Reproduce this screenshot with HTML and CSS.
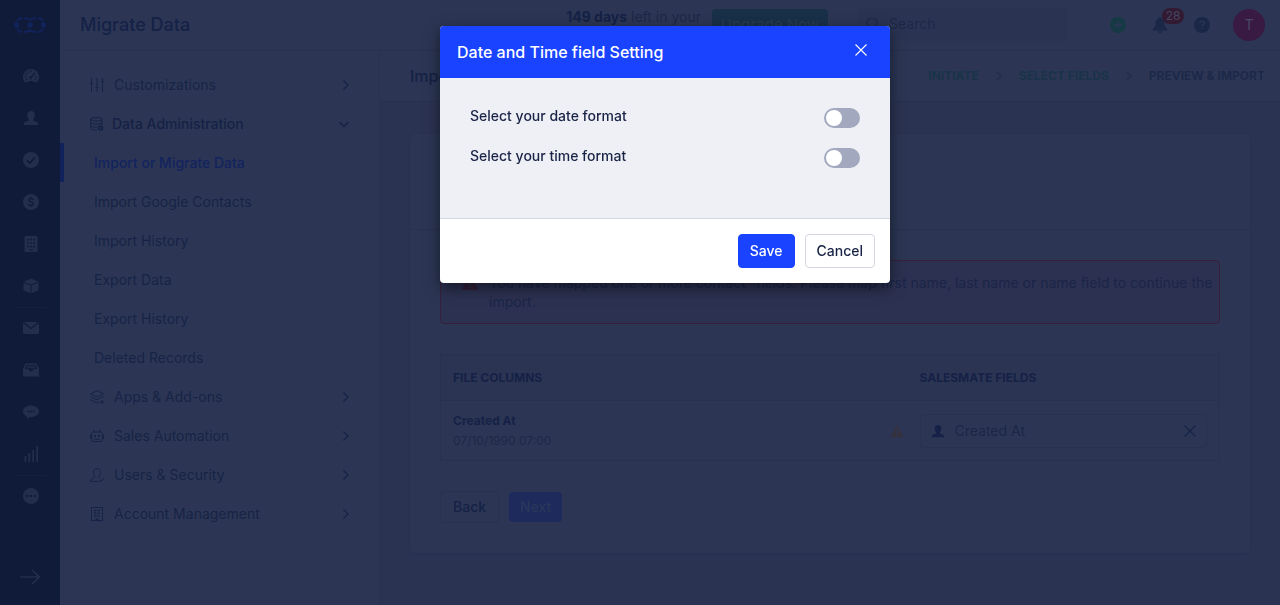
FILE: index.html
```html
<!DOCTYPE html>
<html lang="en">
<head>
<meta charset="utf-8">
<title>Migrate Data</title>
<link rel="stylesheet" href="styles.css">
</head>
<body>
<svg class="sprite" aria-hidden="true">
  <symbol id="person" viewBox="0 0 16 16"><path d="M8 1C5.700 1 4.200 2.600 4.200 5c0 1.700.6 3.300 1.600 4.200v1.300c-.5.8-4 1-4.800 2.800V15h14v-1.700c-.8-1.800-4.300-2-4.800-2.800V9.200c1-.9 1.600-2.500 1.600-4.200C11.800 2.600 10.300 1 8 1z" fill="currentColor"/></symbol>
  <symbol id="warn" viewBox="0 0 16 16"><path fill="currentColor" fill-rule="evenodd" d="M8 1.500 15.500 15H.5zM7.200 6v4.500h1.600V6zm0 5.700v1.600h1.600v-1.600z"/></symbol>
  <symbol id="right" viewBox="0 0 12 12"><path d="m3.500 1.500 4.500 4.500-4.500 4.500" fill="none" stroke="currentColor" stroke-width="1.400"/></symbol>
  <symbol id="down" viewBox="0 0 12 12"><path d="m1.500 4 4.500 4.500L10.500 4" fill="none" stroke="currentColor" stroke-width="1.400"/></symbol>
  <symbol id="cross" viewBox="0 0 12 12"><path d="m.5.5 11 11m0-11-11 11" fill="none" stroke="currentColor" stroke-width="1.100"/></symbol>
</svg>

<div class="app">
  <nav class="rail" aria-label="Main">
    <a class="rail-logo" href="#" aria-label="Home"><svg width="34" height="18" viewBox="0 0 34 18"><g fill="none" stroke="currentColor" stroke-width="1.800"><path d="M4 5C5 3 6.500 2 9 2m2 0c3 0 4 .5 6 2 2-1.500 3-2 6-2M25 2c2.500 0 4 1 5 3M4 13C5 15 6.500 16 9 16m2 0c3 0 4-.5 6-2 2 1.500 3 2 6 2m2 0c2.500 0 4-1 5-3"/></g><g fill="currentColor"><circle cx="3.500" cy="9" r="2.700"/><circle cx="17" cy="9" r="2.700"/><circle cx="30.500" cy="9" r="2.700"/></g></svg></a>
    <a class="rail-item" href="#" aria-label="Dashboard"><svg width="16" height="16" viewBox="0 0 16 16"><path d="M8 1a8 8 0 0 0-6 13.300h2.500c1-1 2-1.400 3.500-1.400s2.500.4 3.500 1.400H14A8 8 0 0 0 8 1z" fill="currentColor"/><g class="cut-line"><path d="M8 2.200v2M4.700 3.200l.8 1.500M2.500 5.700l1.500.8M1.800 9h2M14.200 9h-2M3 12l1.300-.8M13 12l-1.300-.8M7.500 9.800l4.500-5" stroke-width="1.200"/><circle cx="7.700" cy="9.700" r="1"/></g></svg></a>
    <a class="rail-item" href="#" aria-label="Contacts"><svg width="16" height="16"><use href="#person"/></svg></a>
    <a class="rail-item" href="#" aria-label="Activities"><svg width="16" height="16" viewBox="0 0 16 16"><circle cx="8" cy="8" r="8" fill="currentColor"/><path class="cut-line" d="m4 8.300 2.800 2.700L12 5.300" stroke-width="1.600"/></svg></a>
    <a class="rail-item" href="#" aria-label="Deals"><svg width="16" height="16" viewBox="0 0 16 16"><circle cx="8" cy="8" r="8" fill="currentColor"/><path class="cut-line" d="M10.200 6c-.3-1-1.100-1.400-2.200-1.400-1.300 0-2.200.6-2.200 1.600C5.800 8.500 10.300 7.300 10.300 9.700c0 1-.9 1.700-2.300 1.700-1.300 0-2.200-.6-2.400-1.600M8 3v1.600m0 6.800V13" stroke-width="1.300"/></svg></a>
    <a class="rail-item" href="#" aria-label="Companies"><svg width="16" height="16" viewBox="0 0 16 16"><rect x="1.500" width="13" height="16" rx="1.500" fill="currentColor"/><path class="cut-line" d="M4 3.500h8M4 7h8M4 10.500h8" stroke-width="1.600" stroke-dasharray="1.800 1.300"/><path class="cut-line" d="M6 14h4" stroke-width="1"/></svg></a>
    <a class="rail-item" href="#" aria-label="Products"><svg width="16" height="16" viewBox="0 0 16 16"><path d="m8 .5 7.500 3.200v8.600L8 15.500.5 12.300V3.700z" fill="currentColor"/><path class="cut-line" d="M.5 4.200 8 7.200l7.500-3M8 7.200v8.300" stroke-width="1"/></svg></a>
    <hr class="rail-rule">
    <a class="rail-item" href="#" aria-label="Email"><svg width="16" height="16" viewBox="0 0 16 16"><rect y="2" width="16" height="12" rx="1.500" fill="currentColor"/><path class="cut-line" d="m.5 2.500 7.500 6 7.500-6" stroke-width="1.300"/></svg></a>
    <a class="rail-item" href="#" aria-label="Inbox"><svg width="16" height="16" viewBox="0 0 16 16"><path fill="currentColor" fill-rule="evenodd" d="M2.300 1.500h11.400L16 7v7.500H0V7zM3.300 3 2 7h3.700c0 1.500 1 2.300 2.300 2.300S10.300 8.500 10.300 7H14l-1.300-4z"/><path d="M4 4.300h8M3.500 5.800h9" stroke="currentColor"/></svg></a>
    <a class="rail-item" href="#" aria-label="Chat"><svg width="16" height="16" viewBox="0 0 16 16"><path d="M8 1.500c4.500 0 8 2.500 8 5.800s-3.500 5.800-8 5.800H7c-1 .9-2.300 1.700-4 2.200.7-.9 1-1.800.9-2.900C1.500 11.400 0 9.600 0 7.300 0 4 3.500 1.500 8 1.500z" fill="currentColor"/><path class="cut-line" d="M4.500 7.500h7" stroke-width="1.600" stroke-dasharray="1.600 1.100"/></svg></a>
    <a class="rail-item" href="#" aria-label="Reports"><svg width="16" height="16" viewBox="0 0 16 16"><path d="M2.500 16v-6M6.300 16V7M10.200 16V4M14.200 16V0" fill="none" stroke="currentColor" stroke-width="1.700"/></svg></a>
    <hr class="rail-rule">
    <a class="rail-item" href="#" aria-label="More"><svg width="16" height="16" viewBox="0 0 16 16"><circle cx="8" cy="8" r="8" fill="currentColor"/><path class="cut-line" d="M3 8h10" stroke-width="2" stroke-dasharray="2 2"/></svg></a>
    <button class="rail-expand" type="button" aria-label="Expand menu"><svg width="20" height="16" viewBox="0 0 20 16"><path d="M0 8h19M12 1l7.300 7-7.300 7" fill="none" stroke="currentColor" stroke-width="1.600"/></svg></button>
  </nav>

  <div class="main">
    <header class="topbar">
      <h1 class="page-title">Migrate Data</h1>
      <p class="trial"><strong>149 days</strong> <span>left in your</span></p>
      <button class="upgrade" type="button">Upgrade Now</button>
      <label class="search"><svg width="14" height="14" viewBox="0 0 14 14"><circle cx="6" cy="6" r="5" fill="none" stroke="currentColor" stroke-width="1.200"/><path d="m9.600 9.600 4 4" stroke="currentColor" stroke-width="1.200"/></svg><input type="search" placeholder="Search" aria-label="Search"></label>
      <div class="tools">
        <button class="tool tool-add" type="button" aria-label="Add"><svg width="16" height="16" viewBox="0 0 16 16"><circle cx="8" cy="8" r="8" fill="currentColor"/><path class="cut-top" d="M8 4v8M4 8h8" stroke-width="1.500"/></svg></button>
        <button class="tool" type="button" aria-label="Notifications"><svg width="16" height="16" viewBox="0 0 16 16"><path d="M8 0c-.8 0-1.300.5-1.300 1.200C4.500 1.800 3.500 3.500 3.500 6c0 3-1 4.500-2.700 6v1.500h14.400V12c-1.700-1.500-2.700-3-2.700-6 0-2.500-1-4.200-3.200-4.800C9.300.5 8.800 0 8 0zM6 14.200a2 1.800 0 0 0 4 0z" fill="currentColor"/></svg><span class="badge">28</span></button>
        <button class="tool" type="button" aria-label="Help"><svg width="16" height="16" viewBox="0 0 16 16"><circle cx="8" cy="8" r="8" fill="currentColor"/><path class="cut-top" d="M5.800 6.300c0-1.300.9-2.200 2.200-2.200s2.200.8 2.200 2c0 1.500-2.200 1.600-2.200 3.400M8 10.800v1.500" stroke-width="1.300"/></svg></button>
        <button class="avatar" type="button">T</button>
      </div>
    </header>

    <div class="body">
      <aside class="settings" aria-label="Settings">
        <a class="group" href="#"><svg width="14" height="14" viewBox="0 0 14 14"><g class="line"><path d="M1.500 0v14M7 0v14M12.500 0v14M0 5.500h3M5.500 9.500h3M11 3.500h3"/></g></svg><span>Customizations</span><svg class="arrow"><use href="#right"/></svg></a>
        <a class="group open" href="#"><svg width="14" height="14" viewBox="0 0 14 14"><g class="line"><ellipse cx="6.300" cy="2.300" rx="5.600" ry="1.800"/><path d="M.7 2.300v9c0 1 2.300 1.800 5.300 1.800h1M11.900 2.300V8M.7 5.300c0 2.400 11.200 2.400 11.200 0M.7 8.300c0 1.500 3.500 2.100 6.300 1.800"/><circle cx="10.500" cy="11" r="1.900" stroke-width="1.800"/></g></svg><span>Data Administration</span><svg class="arrow"><use href="#down"/></svg></a>
        <a class="sub current" href="#">Import or Migrate Data</a>
        <a class="sub" href="#">Import Google Contacts</a>
        <a class="sub" href="#">Import History</a>
        <a class="sub" href="#">Export Data</a>
        <a class="sub" href="#">Export History</a>
        <a class="sub" href="#">Deleted Records</a>
        <a class="group" href="#"><svg width="14" height="14" viewBox="0 0 14 14"><g class="line"><path d="m7 .6 6.500 3.200L7 7 .5 3.800zM.3 6.500 7 9.800l6.700-3.300M.3 9.500 7 12.900l2-1M12 10v4M10 12h4"/></g></svg><span>Apps &amp; Add-ons</span><svg class="arrow"><use href="#right"/></svg></a>
        <a class="group" href="#"><svg width="14" height="14" viewBox="0 0 14 14"><g class="line"><rect x="1.700" y="3" width="10.600" height="9.500" rx="1.500"/><path d="M4 3V.5M10 3V.5M.5 5.500v4.500M13.500 5.500v4.500M4 10.200h6" /><path d="M4 7h2M8 7h2" stroke-width="2"/></g></svg><span>Sales Automation</span><svg class="arrow"><use href="#right"/></svg></a>
        <a class="group" href="#"><svg width="14" height="14" viewBox="0 0 14 14"><g class="line"><path d="M9 13.400H.6v-1.600c.8-1.300 4-1.500 4.200-2.600V8C3.800 7.200 3.500 5.800 3.500 4.300 3.500 2 4.800.6 7 .6s3.500 1.400 3.500 3.700c0 1.500-.3 2.900-1.300 3.700v1.500l1 .7M9.500 11.700l1.700 1.700 2.600-3.400"/></g></svg><span>Users &amp; Security</span><svg class="arrow"><use href="#right"/></svg></a>
        <a class="group" href="#"><svg width="14" height="14" viewBox="0 0 14 14"><g class="line"><rect x="1.500" y=".5" width="11" height="13"/><path d="M4 3.500h6M4 6.200h6M4 9h6" stroke-width="1.500" stroke-dasharray="2.500 1"/><path d="M5.500 12.500h3" stroke-width="2"/></g></svg><span>Account Management</span><svg class="arrow"><use href="#right"/></svg></a>
      </aside>

      <main class="content">
        <div class="subhead">
          <h2 class="sub-title">Import Contacts</h2>
          <ol class="steps">
            <li class="done">INITIATE</li>
            <li><svg width="12" height="12"><use href="#right"/></svg></li>
            <li class="done">SELECT FIELDS</li>
            <li><svg width="12" height="12"><use href="#right"/></svg></li>
            <li class="next">PREVIEW &amp; IMPORT</li>
          </ol>
        </div>
        <section class="card">
          <div class="card-head"></div>
          <div class="card-body">
            <div class="alert" role="alert"><svg width="18" height="18"><use href="#warn"/></svg><p>You have mapped one or more contact" fields. Please map first name, last name or name field to continue the import.</p></div>
            <table class="map">
              <thead><tr><th>FILE COLUMNS</th><th class="field-col">SALESMATE FIELDS</th></tr></thead>
              <tbody><tr>
                <td><strong>Created At</strong><small>07/10/1990 07:00</small></td>
                <td class="field-col"><div class="field-cell"><svg class="caution" width="14" height="14"><use href="#warn"/></svg><div class="field"><svg width="14" height="14"><use href="#person"/></svg><input type="text" value="Created At" aria-label="Salesmate field"><button type="button" aria-label="Clear field"><svg width="12" height="12"><use href="#cross"/></svg></button></div></div></td>
              </tr></tbody>
            </table>
            <div class="actions">
              <button class="btn-back" type="button">Back</button>
              <button class="btn-next" type="button">Next</button>
            </div>
          </div>
        </section>
      </main>
    </div>
  </div>
</div>

<div class="layer">
  <form class="dialog" role="dialog" aria-labelledby="dialog-title">
    <div class="dialog-head">
      <h2 id="dialog-title">Date and Time field Setting</h2>
      <button type="button" aria-label="Close"><svg width="12" height="12"><use href="#cross"/></svg></button>
    </div>
    <div class="dialog-body">
      <div class="option"><label for="date-format">Select your date format</label><input class="switch" type="checkbox" id="date-format"></div>
      <div class="option"><label for="time-format">Select your time format</label><input class="switch" type="checkbox" id="time-format"></div>
    </div>
    <div class="dialog-foot">
      <button class="save" type="button">Save</button>
      <button class="cancel" type="button">Cancel</button>
    </div>
  </form>
</div>
</body>
</html>
```
FILE: styles.css
```css
:root {
  --surface: #2c3654;
  --page: #2b3352;
  --rail: #0f1b39;
  --rail-icon: #232e4c;
  --line: #283150;
  --ink: #152146;
  --muted: #1d2848;
  --brand: #1943ff;
}

* { box-sizing: border-box; }

body {
  margin: 0;
  font: 14px/20px Inter, "Liberation Sans", sans-serif;
  color: var(--ink);
  background: var(--page);
}

h1, h2, p, ol { margin: 0; padding: 0; font-weight: 500; }
a { color: inherit; text-decoration: none; }
button, input { font: inherit; color: inherit; }
button { padding: 0; border: 0; background: none; }
svg { display: block; flex: none; }

.sprite { position: absolute; width: 0; height: 0; }
.app { display: flex; min-height: 100vh; }

.rail {
  display: flex;
  flex-direction: column;
  align-items: center;
  flex: none;
  width: 60px;
  background: var(--rail);
  color: var(--rail-icon);
}
.rail-logo {
  display: flex;
  align-items: center;
  height: 50px;
  margin-bottom: 5px;
  color: #12235c;
}
.rail-item {
  display: flex;
  align-items: center;
  height: 42px;
  padding-left: 2px;
}
.rail-rule {
  width: 32px;
  height: 1px;
  margin: 0 0 -1px;
  border: 0;
  background: #15203e;
}
.rail-expand { margin-top: auto; padding-bottom: 20px; }
.cut-line { fill: none; stroke: var(--rail); }
.cut-top { fill: none; stroke: var(--surface); }

.main { display: flex; flex-direction: column; flex: 1; min-width: 0; }

.topbar {
  display: flex;
  align-items: center;
  height: 51px;
  padding: 0 15px 0 20px;
  border-bottom: 1px solid var(--line);
  background: var(--surface);
}
.page-title { font-size: 18px; line-height: 24px; }
.trial {
  display: flex;
  gap: 4px;
  margin: 0 11px 16px auto;
  color: var(--muted);
  font-weight: 400;
}
.trial strong { font-weight: 700; color: var(--ink); }
.upgrade {
  width: 116px;
  height: 32px;
  border-radius: 4px;
  background: #183048;
  color: #263a50;
  font-weight: 500;
  font-size: 15px;
}
.search {
  display: flex;
  align-items: center;
  gap: 9px;
  width: 209px;
  height: 33px;
  margin: 0 0 2px 30px;
  padding: 0 8px;
  border-radius: 4px;
  background: #2a3452;
  color: #1d2848;
}
.search input {
  width: 100%;
  min-width: 0;
  padding: 0;
  border: 0;
  outline: 0;
  background: none;
}
.search input::placeholder { color: #1d2848; opacity: 1; }
.tools {
  display: flex;
  align-items: center;
  gap: 26px;
  margin-left: 43px;
  color: #1b2747;
}
.tool { position: relative; }
.tool-add { color: #163a45; }
.badge {
  position: absolute;
  top: -9px;
  left: 10px;
  width: 22px;
  height: 16px;
  border-radius: 8px;
  background: #331a33;
  color: #44465e;
  font-size: 12px;
  line-height: 16px;
}
.avatar {
  width: 32px;
  height: 32px;
  margin-left: -3px;
  border-radius: 50%;
  background: #381a42;
  color: #4b4664;
}

.body { display: flex; flex: 1; }

.settings {
  flex: none;
  width: 320px;
  padding-top: 14px;
  border-right: 1px solid var(--line);
  background: var(--surface);
  color: #172346;
}
.group, .sub { display: flex; align-items: center; height: 39px; }
.group { gap: 10px; padding: 0 27px 0 30px; }
.group.open { gap: 8px; padding-right: 29px; font-weight: 500; color: var(--ink); }
.arrow { width: 12px; height: 12px; margin-left: auto; }
.line { fill: none; stroke: currentColor; }
.sub { padding-left: 30px; border-left: 4px solid transparent; }
.current { border-color: #11215c; font-weight: 500; color: #13235f; }

.content { flex: 1; min-width: 0; }
.subhead {
  display: flex;
  align-items: center;
  justify-content: space-between;
  height: 51px;
  padding: 0 15px 0 30px;
  border-bottom: 1px solid var(--line);
  background: var(--surface);
}
.sub-title { font-size: 16px; }
.steps {
  display: flex;
  align-items: center;
  gap: 14px;
  list-style: none;
  font-size: 12px;
  font-weight: 700;
  color: #222d4b;
}
.done { color: #193349; }
.next { color: #1d2848; }

.card {
  margin: 32px 30px 30px;
  border-radius: 4px;
  background: var(--surface);
  box-shadow: 0 1px 2px #263050;
}
.card-head { height: 96px; border-bottom: 1px solid var(--line); }
.card-body { padding: 30px; }

.alert {
  display: flex;
  gap: 10px;
  padding: 12px 4px 12px 20px;
  border: 1px solid #37203c;
  border-radius: 4px;
  background: #2c3151;
  line-height: 19px;
}
.alert svg { color: #33203a; }
.alert p { font-weight: 400; color: #1a2548; }

.map {
  width: 100%;
  margin: 30px 0;
  border: 1px solid var(--line);
  border-collapse: collapse;
}
.map th {
  height: 46px;
  padding: 0 12px;
  background: #2c3453;
  text-align: left;
  font-size: 12px;
  font-weight: 700;
}
.map td { height: 60px; padding: 0 12px; border-top: 1px solid var(--line); }
.map strong, .map small { display: block; font-size: 12px; }
.map strong { font-weight: 700; }
.map small { color: #1d2848; }
.map .field-col { width: 300px; padding-left: 0; }
.field-cell { display: flex; align-items: center; gap: 16px; margin-left: -30px; }
.caution { color: #35323f; }
.field {
  display: flex;
  align-items: center;
  flex: 1;
  gap: 10px;
  height: 34px;
  padding: 0 10px;
  border: 1px solid var(--line);
  border-radius: 4px;
}
.field input {
  flex: 1;
  min-width: 0;
  padding: 0;
  border: 0;
  outline: 0;
  background: none;
  color: #1b2647;
}

.actions { display: flex; align-items: center; gap: 10px; }
.btn-back {
  height: 32px;
  padding: 0 12px;
  border: 1px solid var(--line);
  border-radius: 4px;
  font-weight: 500;
}
.btn-next {
  height: 30px;
  padding: 0 11px;
  border-radius: 4px;
  background: #1d2a5b;
  color: #2b365c;
  font-weight: 500;
}

.layer {
  position: fixed;
  inset: 0;
  display: flex;
  align-items: flex-start;
  justify-content: center;
  padding: 26px 0 0 50px;
}
.dialog {
  width: 450px;
  border-radius: 4px;
  overflow: hidden;
  background: #fff;
  color: #182345;
  font-weight: 500;
  box-shadow: 0 5px 15px rgba(0, 0, 0, .5);
}
.dialog-head {
  display: flex;
  align-items: center;
  justify-content: space-between;
  height: 52px;
  padding: 0 23px 0 17px;
  background: var(--brand);
  color: #fff;
}
.dialog-head h2 { font-size: 16px; }
.dialog-head button { padding-bottom: 4px; }
.dialog-body {
  display: flex;
  flex-direction: column;
  gap: 18px;
  padding: 28px 30px 50px;
  border-bottom: 1px solid #d5d7e0;
  background: #eff0f5;
}
.option { display: flex; align-items: flex-start; justify-content: space-between; }
.switch {
  appearance: none;
  width: 36px;
  height: 20px;
  margin: 2px 0 0;
  padding: 2px;
  border-radius: 10px;
  background: #a2a9bf;
}
.switch::before {
  content: "";
  display: block;
  width: 16px;
  height: 16px;
  border-radius: 50%;
  background: #fff;
}
.switch:checked::before { margin-left: auto; }
.dialog-foot {
  display: flex;
  justify-content: flex-end;
  gap: 10px;
  padding: 15px;
}
.dialog-foot button { height: 34px; padding: 0 11px; border-radius: 4px; }
.save { border: 1px solid var(--brand); background: var(--brand); color: #fff; }
.cancel { border: 1px solid #d5d7e0; background: #fff; }
```
